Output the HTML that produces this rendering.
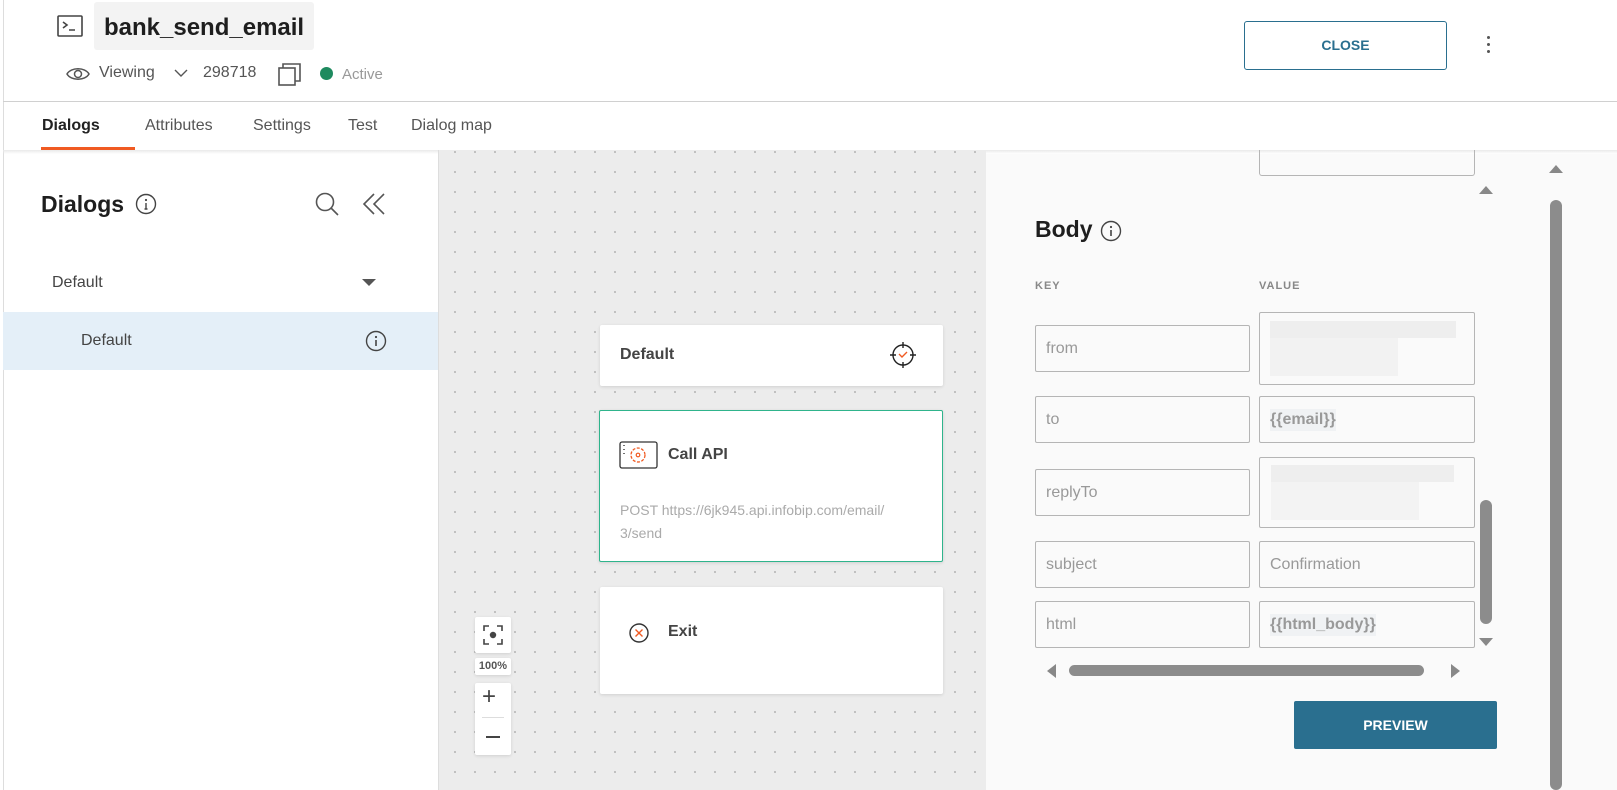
<!DOCTYPE html>
<html><head><meta charset="utf-8"><style>
*{box-sizing:border-box;margin:0;padding:0}
body{width:1617px;height:790px;overflow:hidden;background:#fff;font-family:"Liberation Sans",sans-serif;color:#222;position:relative}
.abs{position:absolute}
.canvas{left:438px;top:150px;width:548px;height:640px;background-color:#ececec;background-image:radial-gradient(circle,#b8b8b8 0.8px,transparent 1.2px);background-size:20px 20px;background-position:6px 12px;border-left:1px solid #ddd}
.card{background:#fff;box-shadow:0 1px 3px rgba(0,0,0,.12);border-radius:2px}
.inp{border:1px solid #b5b5b5;border-radius:2px;background:#fafafa;color:#999;font-size:16px;padding-left:10px;display:flex;align-items:center}
.blur{background:#eeeeee}
</style></head><body>
<div class="abs" style="left:3px;top:0;width:1px;height:790px;background:#ddd"></div>
<svg class="abs" style="left:57px;top:15px" width="26" height="22" viewBox="0 0 26 22"><rect x="1" y="1" width="24" height="20" rx="1" fill="none" stroke="#444" stroke-width="1.6"/><path d="M6 7l4 3-4 3M12 15h6" fill="none" stroke="#444" stroke-width="1.6"/></svg>
<div class="abs" style="left:94px;top:2px;width:220px;height:48px;background:#f3f3f3;border-radius:3px;font-size:24px;font-weight:bold;padding:12px 0 0 10px;color:#1e1e1e">bank_send_email</div>
<svg class="abs" style="left:66px;top:66px" width="24" height="16" viewBox="0 0 24 16"><path d="M1 8C5 1 19 1 23 8C19 15 5 15 1 8Z" fill="none" stroke="#555" stroke-width="1.5"/><circle cx="12" cy="8" r="3.5" fill="none" stroke="#555" stroke-width="1.5"/></svg>
<div class="abs" style="left:99px;top:64px;font-size:16px;color:#555">Viewing</div>
<svg class="abs" style="left:174px;top:69px" width="14" height="9"><path d="M1 1l6 6 6-6" fill="none" stroke="#555" stroke-width="1.4"/></svg>
<div class="abs" style="left:203px;top:64px;font-size:16px;color:#555">298718</div>
<svg class="abs" style="left:278px;top:63px" width="24" height="24"><rect x="1" y="5" width="16" height="17" fill="none" stroke="#555" stroke-width="1.6"/><path d="M5 5V1h17v17h-5" fill="none" stroke="#555" stroke-width="1.6"/></svg>
<div class="abs" style="left:320px;top:67px;width:13px;height:13px;border-radius:50%;background:#1e8a5f"></div>
<div class="abs" style="left:342px;top:66px;font-size:15px;color:#999">Active</div>
<div class="abs" style="left:1244px;top:21px;width:203px;height:49px;border:1px solid #2a6f8f;border-radius:3px;color:#2a6f8f;font-size:14px;font-weight:bold;text-align:center;line-height:47px">CLOSE</div>
<div class="abs" style="left:1487px;top:36px;width:4px"><div style="width:3px;height:3px;background:#555;border-radius:50%;margin-bottom:4px"></div><div style="width:3px;height:3px;background:#555;border-radius:50%;margin-bottom:4px"></div><div style="width:3px;height:3px;background:#555;border-radius:50%"></div></div>
<div class="abs" style="left:3px;top:101px;width:1614px;height:1px;background:#d0d0d0"></div>
<div class="abs" style="top:117px;left:42px;font-size:16px;font-weight:bold;color:#222">Dialogs</div>
<div class="abs" style="top:117px;left:145px;font-size:16px;color:#555">Attributes</div>
<div class="abs" style="top:117px;left:253px;font-size:16px;color:#555">Settings</div>
<div class="abs" style="top:117px;left:348px;font-size:16px;color:#555">Test</div>
<div class="abs" style="top:117px;left:411px;font-size:16px;color:#555">Dialog map</div>
<div class="abs" style="left:41px;top:147px;width:94px;height:3px;background:#f05a22"></div>
<div class="abs" style="left:3px;top:150px;width:1614px;height:4px;background:linear-gradient(#e9e9e9,rgba(255,255,255,0))"></div>
<div class="abs" style="left:41px;top:191px;font-size:23px;font-weight:bold;color:#1e1e1e">Dialogs</div>
<svg class="abs" style="left:135px;top:193px" width="22" height="22"><circle cx="11" cy="11" r="9.5" fill="none" stroke="#444" stroke-width="1.4"/><path d="M11 10v6M9.5 16h3" stroke="#444" stroke-width="1.4"/><circle cx="11" cy="7" r="1.1" fill="#444"/></svg>
<svg class="abs" style="left:315px;top:192px" width="25" height="25"><circle cx="10" cy="10" r="8.5" fill="none" stroke="#555" stroke-width="1.6"/><path d="M16 16l7 7" stroke="#555" stroke-width="1.6"/></svg>
<svg class="abs" style="left:362px;top:193px" width="24" height="22"><path d="M12 1L2 11l10 10M22 1L12 11l10 10" fill="none" stroke="#555" stroke-width="1.6"/></svg>
<div class="abs" style="left:52px;top:274px;font-size:16px;color:#444">Default</div>
<svg class="abs" style="left:362px;top:279px" width="14" height="8"><path d="M0 0h14L7 7z" fill="#555"/></svg>
<div class="abs" style="left:3px;top:312px;width:435px;height:58px;background:#e4eff8"></div>
<div class="abs" style="left:81px;top:332px;font-size:16px;color:#444">Default</div>
<svg class="abs" style="left:365px;top:330px" width="22" height="22"><circle cx="11" cy="11" r="9.5" fill="none" stroke="#444" stroke-width="1.4"/><path d="M11 10v6" stroke="#444" stroke-width="1.6"/><circle cx="11" cy="7" r="1.1" fill="#444"/></svg>
<div class="abs canvas"></div>
<div class="abs card" style="left:600px;top:325px;width:343px;height:61px"><div style="position:absolute;left:20px;top:21px;font-size:16px;font-weight:bold;color:#444">Default</div>
<svg style="position:absolute;left:289px;top:16px" width="28" height="28"><circle cx="14" cy="14" r="10" fill="none" stroke="#222" stroke-width="1.4"/><path d="M14 1v6M14 21v6M1 14h6M21 14h6" stroke="#222" stroke-width="1.4"/><path d="M10 13l3 3 5-5" fill="none" stroke="#f05a22" stroke-width="1.4"/></svg></div>
<div class="abs card" style="left:599px;top:410px;width:344px;height:152px;border:1px solid #2fb48c"><svg style="position:absolute;left:19px;top:30px" width="40" height="28"><rect x="1" y="1" width="37" height="26" rx="2" fill="none" stroke="#333" stroke-width="1.3"/><path d="M5 4v1M5 8v1M5 12v1" stroke="#333" stroke-width="1.4"/><circle cx="19" cy="14" r="7" fill="none" stroke="#f05a22" stroke-width="1.3" stroke-dasharray="3 1.5"/><circle cx="19" cy="14" r="1.8" fill="none" stroke="#f05a22" stroke-width="1.2"/></svg>
<div style="position:absolute;left:68px;top:35px;font-size:16px;font-weight:bold;color:#444">Call API</div>
<div style="position:absolute;left:20px;top:88px;font-size:14px;line-height:23px;color:#aaa;width:320px">POST https://6jk945.api.infobip.com/email/<br>3/send</div></div>
<div class="abs card" style="left:600px;top:587px;width:343px;height:107px"><svg style="position:absolute;left:28px;top:35px" width="22" height="22"><circle cx="11" cy="11" r="9" fill="none" stroke="#333" stroke-width="1.4"/><path d="M7.5 7.5l7 7M14.5 7.5l-7 7" stroke="#f05a22" stroke-width="1.4"/></svg>
<div style="position:absolute;left:68px;top:36px;font-size:16px;font-weight:bold;color:#444">Exit</div></div>
<div class="abs card" style="left:475px;top:617px;width:36px;height:36px"><svg style="position:absolute;left:8px;top:8px" width="20" height="20"><path d="M1 6V1h5M14 1h5v5M19 14v5h-5M6 19H1v-5" fill="none" stroke="#444" stroke-width="1.6"/><circle cx="10" cy="10" r="3.2" fill="#444"/></svg></div>
<div class="abs card" style="left:475px;top:658px;width:36px;height:17px;font-size:11px;text-align:center;line-height:17px;color:#555;font-weight:bold">100%</div>
<div class="abs card" style="left:475px;top:683px;width:36px;height:72px"><div style="position:absolute;left:7px;top:0;font-size:24px;color:#444">+</div><div style="position:absolute;left:7px;top:34px;width:22px;height:1px;background:#ddd"></div><div style="position:absolute;left:11px;top:53px;width:14px;height:1.5px;background:#444"></div></div>
<div class="abs" style="left:986px;top:154px;width:631px;height:636px;background:#fafafa"></div>
<div class="abs" style="left:1259px;top:150px;width:216px;height:26px;border:1px solid #b5b5b5;border-top:none;border-radius:0 0 3px 3px"></div>
<div class="abs" style="left:1035px;top:216px;font-size:23px;font-weight:bold;color:#1e1e1e">Body</div>
<svg class="abs" style="left:1100px;top:220px" width="22" height="22"><circle cx="11" cy="11" r="9.5" fill="none" stroke="#444" stroke-width="1.4"/><path d="M11 10v6" stroke="#444" stroke-width="1.6"/><circle cx="11" cy="7" r="1.1" fill="#444"/></svg>
<div class="abs" style="left:1035px;top:280px;font-size:11px;font-weight:bold;color:#888;letter-spacing:1px">KEY</div>
<div class="abs" style="left:1259px;top:280px;font-size:11px;font-weight:bold;color:#888;letter-spacing:1px">VALUE</div>
<div class="abs inp" style="left:1035px;top:325px;width:215px;height:47px">from</div>
<div class="abs inp" style="left:1035px;top:396px;width:215px;height:47px">to</div>
<div class="abs inp" style="left:1035px;top:469px;width:215px;height:47px">replyTo</div>
<div class="abs inp" style="left:1035px;top:541px;width:215px;height:47px">subject</div>
<div class="abs inp" style="left:1035px;top:601px;width:215px;height:47px">html</div>
<div class="abs inp" style="left:1259px;top:312px;width:216px;height:73px"></div>
<div class="abs blur" style="left:1270px;top:321px;width:186px;height:17px"></div>
<div class="abs blur" style="left:1270px;top:338px;width:128px;height:38px;background:#f2f2f2"></div>
<div class="abs inp" style="left:1259px;top:396px;width:216px;height:47px"><span style="background:#f0f2f4;font-weight:bold;color:#999;padding:2px 0">{{email}}</span></div>
<div class="abs inp" style="left:1259px;top:457px;width:216px;height:71px"></div>
<div class="abs blur" style="left:1271px;top:465px;width:183px;height:17px"></div>
<div class="abs blur" style="left:1271px;top:482px;width:148px;height:38px;background:#f3f3f3"></div>
<div class="abs inp" style="left:1259px;top:541px;width:216px;height:47px">Confirmation</div>
<div class="abs inp" style="left:1259px;top:601px;width:216px;height:47px"><span style="background:#f0f2f4;font-weight:bold;color:#999;padding:2px 0">{{html_body}}</span></div>
<svg class="abs" style="left:1478px;top:183px" width="16" height="12"><path d="M1 11L8 3l7 8z" fill="#888"/></svg>
<div class="abs" style="left:1480px;top:500px;width:12px;height:124px;border-radius:6px;background:#8c8c8c"></div>
<svg class="abs" style="left:1478px;top:637px" width="16" height="12"><path d="M1 1l7 8 7-8z" fill="#888"/></svg>
<svg class="abs" style="left:1044px;top:663px" width="14" height="16"><path d="M12 1L3 8l9 7z" fill="#888"/></svg>
<div class="abs" style="left:1069px;top:665px;width:355px;height:11px;border-radius:6px;background:#8c8c8c"></div>
<svg class="abs" style="left:1449px;top:663px" width="14" height="16"><path d="M2 1l9 7-9 7z" fill="#888"/></svg>
<div class="abs" style="left:1294px;top:701px;width:203px;height:48px;background:#2a6f8f;border-radius:2px;color:#fff;font-size:14px;font-weight:bold;text-align:center;line-height:48px">PREVIEW</div>
<svg class="abs" style="left:1548px;top:162px" width="16" height="12"><path d="M1 11L8 3l7 8z" fill="#888"/></svg>
<div class="abs" style="left:1550px;top:200px;width:12px;height:590px;border-radius:6px;background:#8c8c8c"></div>
</body></html>
